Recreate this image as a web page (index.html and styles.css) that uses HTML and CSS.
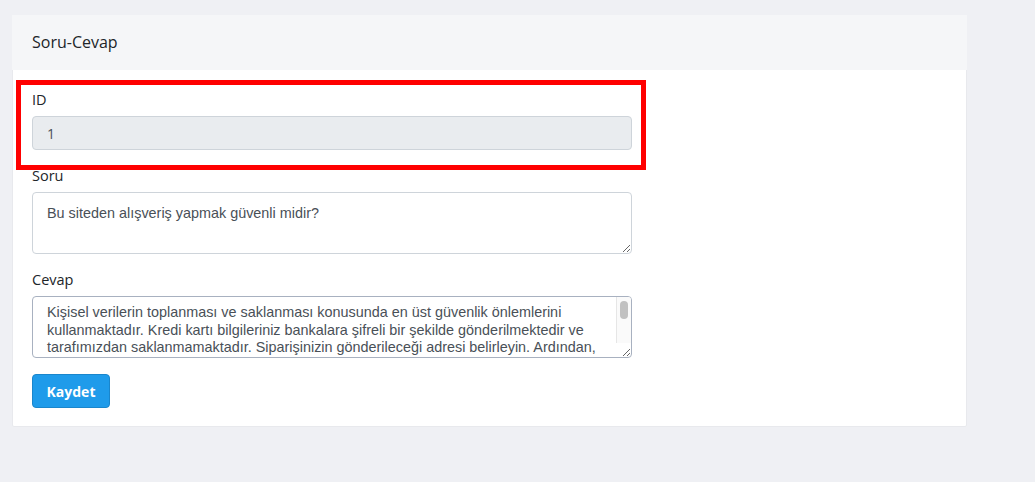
FILE: index.html
```html
<!DOCTYPE html>
<html lang="tr">
<head>
<meta charset="utf-8">
<title>Soru-Cevap</title>
<link rel="stylesheet" href="styles.css">
</head>
<body>
<div class="card">
  <div class="card-header">Soru-Cevap</div>
  <div class="card-body">
    <div class="highlight"></div>
    <form class="form">
      <div class="form-group">
        <label class="label">ID</label>
        <input class="control control-disabled" type="text" value="1" readonly>
      </div>
      <div class="form-group">
        <label class="label">Soru</label>
        <textarea class="control area area-soru">Bu siteden alışveriş yapmak güvenli midir?</textarea>
      </div>
      <div class="form-group">
        <label class="label">Cevap</label>
        <div class="area-wrap">
          <textarea class="control area area-scroll">Kişisel verilerin toplanması ve saklanması konusunda en üst güvenlik önlemlerini kullanmaktadır. Kredi kartı bilgileriniz bankalara şifreli bir şekilde gönderilmektedir ve tarafımızdan saklanmamaktadır. Siparişinizin gönderileceği adresi belirleyin. Ardından, kişisel verileriniz korunarak güvenli ödeme adımına geçebilirsiniz. Ödeme sonrası siparişiniz hazırlanarak kargoya teslim edilir.</textarea>
          <div class="scrollbar"><div class="thumb"></div></div>
        </div>
      </div>
      <button class="btn" type="button">Kaydet</button>
    </form>
  </div>
</div>
</body>
</html>
```

FILE: styles.css
```css
* { box-sizing: border-box; }

html, body {
  margin: 0;
  padding: 0;
  background: #eff0f4;
  font-family: "Open Sans", "Liberation Sans", sans-serif;
  font-size: 14px;
  color: #212529;
}

body {
  padding: 15px 0 0 12px;
}

.card {
  width: 955px;
  background: #fff;
  border: 1px solid #e8e9ed;
  border-radius: 2px;
}

.card-header {
  height: 55px;
  background: #f5f6f8;
  display: flex;
  align-items: center;
  font-size: 16px;
  color: #212529;
  margin: -1px -1px 0 -1px;
  padding: 0 20px 1px 20px;
}

.card-body {
  position: relative;
  padding: 20px 20px 18px 19px;
}

.highlight {
  position: absolute;
  left: 3px;
  top: 10px;
  width: 630px;
  height: 90px;
  border: 5px solid #ff0000;
  pointer-events: none;
}

.form {
  width: 600px;
}

.form-group {
  margin-bottom: 16px;
}

.label {
  display: block;
  line-height: 20px;
  margin-bottom: 6px;
  font-size: 14.5px;
  color: #212529;
}

.control {
  display: block;
  width: 600px;
  height: 34px;
  padding: 0 14px;
  font-family: "Liberation Sans", Arial, sans-serif;
  font-size: 14.4px;
  color: #495057;
  background: #fff;
  border: 1px solid #ced4da;
  border-radius: 4px;
  outline: none;
}

.control-disabled {
  background: #e9ecef;
  color: #495057;
  font-family: "Open Sans", sans-serif;
  font-size: 14px;
}

.area {
  height: 62px;
  padding: 6px 14px;
  line-height: 17.5px;
  resize: vertical;
  overflow: hidden;
}

.area-soru {
  padding-top: 12px;
}

.area-wrap {
  position: relative;
  width: 600px;
}

.area-scroll {
  border-color: #a8b1c0;
  padding: 7px 29px 0 14px;
}

.scrollbar {
  position: absolute;
  right: 1px;
  top: 1px;
  width: 15px;
  height: 46px;
  background: #fafafa;
  border-left: 1px solid #e6e6e6;
  border-top-right-radius: 3px;
}

.thumb {
  position: absolute;
  left: 3px;
  top: 4px;
  width: 8px;
  height: 18px;
  border-radius: 4px;
  background: #c1c1c1;
}

.btn {
  display: block;
  height: 34px;
  width: 78px;
  background: #1f9bea;
  border: 1px solid #1a86cc;
  border-radius: 4px;
  color: #fff;
  font-family: inherit;
  font-weight: 700;
  font-size: 14px;
  padding: 0;
  cursor: pointer;
}
```
